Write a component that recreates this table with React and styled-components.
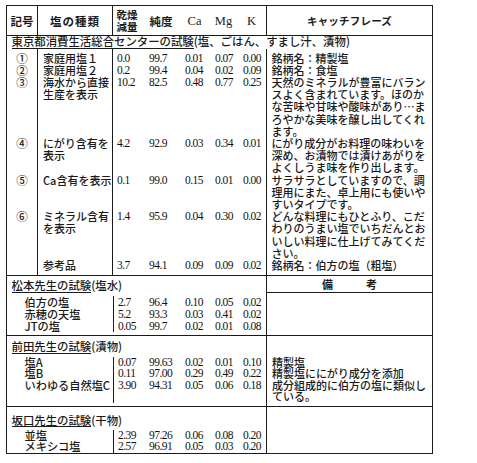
import React from 'react';
import styled, { createGlobalStyle } from 'styled-components';

const INK = '#1a1a1a';
const JP = `"Noto Sans CJK JP", "Noto Sans", sans-serif`;
const NUM = `"Liberation Serif", "Times New Roman", serif`;
const COLS = '31px 75px 154px 1fr';
const NUMCOLS = '32px 36px 30px 28px 28px';
const LH1 = 12.2;

const Global = createGlobalStyle`
  html, body { margin: 0; padding: 0; background: #fff; }
  body { font-family: ${JP}; color: ${INK}; font-weight: 500; }
`;

const Page = styled.div`
  width: 477px;
  height: 463px;
  box-sizing: border-box;
  padding: 5px 0 0 6px;
  background: #fff;
`;

const Table = styled.div`
  width: 427px;
  box-sizing: border-box;
  border: 1.5px solid ${INK};
  display: flex;
  flex-direction: column;
`;

/* ---------- header ---------- */
const HeadRow = styled.div`
  display: grid;
  grid-template-columns: ${COLS};
  height: 29px;
  border-bottom: 1px solid ${INK};
`;

const HeadCell = styled.div`
  display: flex;
  align-items: center;
  justify-content: center;
  border-right: ${(p) => (p.$last ? 'none' : `1px solid ${INK}`)};
  font-weight: 700;
  font-size: ${(p) => p.$size || 11.5}px;
  letter-spacing: ${(p) => p.$ls || 0}px;
  white-space: nowrap;
`;

const HeadNums = styled.div`
  display: grid;
  grid-template-columns: ${NUMCOLS};
  align-items: center;
  border-right: 1px solid ${INK};
`;

const NumHead = styled.div`
  text-align: center;
  padding-right: ${(p) => p.$pr || 3}px;
  font-family: ${(p) => (p.$serif ? NUM : JP)};
  font-weight: ${(p) => (p.$serif ? 400 : 700)};
  font-size: ${(p) => p.$size || 11.5}px;
  line-height: ${(p) => p.$lh || 12}px;
`;

/* ---------- section titles ---------- */
const SectionTitle = styled.div`
  height: ${(p) => p.$h}px;
  box-sizing: border-box;
  padding-left: 4.5px;
  display: flex;
  align-items: flex-end;
  font-size: 11.4px;
  white-space: nowrap;
`;

const TitleMain = styled.span`
  display: inline-block;
  line-height: 11.5px;
  border-bottom: 1px solid ${INK};
`;

const TitleRest = styled.span`
  display: inline-block;
  line-height: 11.5px;
  border-bottom: 1px solid transparent;
`;

/* ---------- section 1 grid ---------- */
const DataGrid = styled.div`
  display: grid;
  grid-template-columns: ${COLS};
  border-bottom: 1px solid ${INK};
  line-height: ${LH1}px;
`;

const Cell = styled.div`
  padding-top: ${(p) => p.$pt || 0}px;
  padding-bottom: ${(p) => p.$pb || 0}px;
  border-right: ${(p) => (p.$line ? `1px solid ${INK}` : 'none')};
  white-space: nowrap;
`;

const MarkCell = styled(Cell)`
  text-align: center;
  font-size: 11.5px;
`;

const NameCell = styled(Cell)`
  padding-left: 5px;
  font-size: 11px;
`;

const NumsCell = styled(Cell)`
  display: grid;
  grid-template-columns: ${NUMCOLS};
  align-content: start;
`;

const CatchCell = styled(Cell)`
  padding-left: 4.5px;
  font-size: 11px;
`;

const Num = styled.span`
  padding-left: 4px;
  font-family: ${NUM};
  font-weight: 400;
  font-size: 11.5px;
  letter-spacing: -0.55px;
  color: #111;
`;

const Line = styled.div`
  white-space: nowrap;
`;

/* ---------- lower sections ---------- */
const Lower = styled.div`
  display: flex;
  border-bottom: ${(p) => (p.$last ? 'none' : `1px solid ${INK}`)};
`;

const LowerLeft = styled.div`
  width: 260px;
  box-sizing: border-box;
  border-right: 1px solid ${INK};
  display: flex;
  flex-direction: column;
`;

const LowerBody = styled.div`
  display: grid;
  grid-template-columns: 106px 154px;
  padding: ${(p) => p.$pt}px 0 ${(p) => p.$pb}px;
  line-height: ${(p) => p.$lh}px;
`;

const LowerName = styled.div`
  padding-left: 17.5px;
  font-size: 11.2px;
  height: ${(p) => p.$lh}px;
  white-space: nowrap;
`;

const LowerNums = styled.div`
  display: grid;
  grid-template-columns: 31px 36px 30px 28px 28px;
  border-left: 1px solid ${INK};
  height: ${(p) => p.$lh}px;
`;

const LowerRight = styled.div`
  flex: 1;
  display: flex;
  flex-direction: column;
  padding-top: ${(p) => p.$pt || 0}px;
  font-size: 11px;
  line-height: ${(p) => p.$lh || 12}px;
`;

const RightText = styled.div`
  padding-left: 5px;
`;

const RemarkHead = styled.div`
  height: ${(p) => p.$h}px;
  box-sizing: border-box;
  border-bottom: 1px solid ${INK};
  display: flex;
  align-items: center;
  justify-content: center;
  font-weight: 700;
  font-size: 11px;
  white-space: pre;
`;

/* ---------- data ---------- */
const sec1 = [
  { mark: '①', name: ['家庭用塩１'], nums: ['0.0', '99.7', '0.01', '0.07', '0.00'], text: ['銘柄名：精製塩'] },
  { mark: '②', name: ['家庭用塩２'], nums: ['0.2', '99.4', '0.04', '0.02', '0.09'], text: ['銘柄名：食塩'] },
  {
    mark: '③',
    name: ['海水から直接', '生産を表示'],
    nums: ['10.2', '82.5', '0.48', '0.77', '0.25'],
    text: [
      '天然のミネラルが豊富にバラン',
      'スよく含まれています。ほのか',
      'な苦味や甘味や酸味があり…ま',
      'ろやかな美味を醸し出してくれ',
      'ます。',
    ],
  },
  {
    mark: '④',
    name: ['にがり含有を', '表示'],
    nums: ['4.2', '92.9', '0.03', '0.34', '0.01'],
    text: ['にがり成分がお料理の味わいを', '深め、お漬物では漬けあがりを', 'よくしうま味を作り出します。'],
  },
  {
    mark: '⑤',
    name: ['Ca含有を表示'],
    nums: ['0.1', '99.0', '0.15', '0.01', '0.00'],
    text: ['サラサラとしていますので、調', '理用にまた、卓上用にも使いや', 'すいタイプです。'],
  },
  {
    mark: '⑥',
    name: ['ミネラル含有', 'を表示'],
    nums: ['1.4', '95.9', '0.04', '0.30', '0.02'],
    text: ['どんな料理にもひとふり、こだ', 'わりのうまい塩でいちだんとお', 'いしい料理に仕上げてみてくだ', 'さい。'],
  },
  { mark: '', name: ['参考品'], nums: ['3.7', '94.1', '0.09', '0.09', '0.02'], text: ['銘柄名：伯方の塩（粗塩）'] },
];

const lowers = [
  {
    title: '松本先生の試験',
    rest: '(塩水)',
    titleH: 16.5,
    pt: 3,
    pb: 3.5,
    lh: 12,
    remark: true,
    rows: [
      { name: '伯方の塩', nums: ['2.7', '96.4', '0.10', '0.05', '0.02'] },
      { name: '赤穂の天塩', nums: ['5.2', '93.3', '0.03', '0.41', '0.02'] },
      { name: 'JTの塩', nums: ['0.05', '99.7', '0.02', '0.01', '0.08'] },
    ],
  },
  {
    title: '前田先生の試験',
    rest: '(漬物)',
    titleH: 17.5,
    pt: 3,
    pb: 3.5,
    lh: 11.5,
    rows: [
      { name: '塩A', nums: ['0.07', '99.63', '0.02', '0.01', '0.10'] },
      { name: '塩B', nums: ['0.11', '97.00', '0.29', '0.49', '0.22'] },
      { name: 'いわゆる自然塩C', nums: ['3.90', '94.31', '0.05', '0.06', '0.18'] },
      { name: '', nums: null },
    ],
    text: ['精製塩', '精製塩ににがり成分を添加', '成分組成的に伯方の塩に類似し', 'ている。'],
  },
  {
    title: '坂口先生の試験',
    rest: '(干物)',
    titleH: 20,
    pt: 2.5,
    pb: 0.5,
    lh: 11.5,
    rows: [
      { name: '並塩', nums: ['2.39', '97.26', '0.06', '0.08', '0.20'] },
      { name: 'メキシコ塩', nums: ['2.57', '96.91', '0.05', '0.03', '0.20'] },
    ],
  },
];

function Nums({ values }) {
  return values.map((v, i) => <Num key={i}>{v}</Num>);
}

export default function App() {
  return (
    <>
      <Global />
      <Page>
        <Table>
          <HeadRow>
            <HeadCell>記号</HeadCell>
            <HeadCell $ls={1}>塩の種類</HeadCell>
            <HeadNums>
              <NumHead $size={10.5} $lh={11.5} $pr={4}>
                乾燥
                <br />
                減量
              </NumHead>
              <NumHead $pr={4}>純度</NumHead>
              <NumHead $serif $size={12.5}>Ca</NumHead>
              <NumHead $serif $size={12.5}>Mg</NumHead>
              <NumHead $serif $size={12.5}>K</NumHead>
            </HeadNums>
            <HeadCell $last $size={10.5} $ls={0.2}>キャッチフレーズ</HeadCell>
          </HeadRow>

          <SectionTitle $h={12.5}>
            <TitleMain>東京都消費生活総合センターの試験</TitleMain>
            <TitleRest>(塩、ごはん、すまし汁、漬物)</TitleRest>
          </SectionTitle>

          <DataGrid>
            {sec1.map((r, i) => {
              const pt = i === 0 ? 3 : 0;
              const pb = i === sec1.length - 1 ? 4 : 0;
              return (
                <React.Fragment key={i}>
                  <MarkCell $line $pt={pt} $pb={pb}>{r.mark}</MarkCell>
                  <NameCell $line $pt={pt} $pb={pb}>
                    {r.name.map((l, j) => (
                      <Line key={j}>{l}</Line>
                    ))}
                  </NameCell>
                  <NumsCell $line $pt={pt} $pb={pb}>
                    <Nums values={r.nums} />
                  </NumsCell>
                  <CatchCell $pt={pt} $pb={pb}>
                    {r.text.map((l, j) => (
                      <Line key={j}>{l}</Line>
                    ))}
                  </CatchCell>
                </React.Fragment>
              );
            })}
          </DataGrid>

          {lowers.map((s, si) => (
            <Lower key={si} $last={si === lowers.length - 1}>
              <LowerLeft>
                <SectionTitle $h={s.titleH}>
                  <TitleMain>{s.title}</TitleMain>
                  <TitleRest>{s.rest}</TitleRest>
                </SectionTitle>
                <LowerBody $pt={s.pt} $pb={s.pb} $lh={s.lh}>
                  {s.rows.map((r, ri) => (
                    <React.Fragment key={ri}>
                      <LowerName $lh={s.lh}>{r.name}</LowerName>
                      <LowerNums $lh={s.lh}>{r.nums && <Nums values={r.nums} />}</LowerNums>
                    </React.Fragment>
                  ))}
                </LowerBody>
              </LowerLeft>
              {s.remark ? (
                <LowerRight>
                  <RemarkHead $h={s.titleH}>{'備　　　考'}</RemarkHead>
                </LowerRight>
              ) : (
                <LowerRight $pt={s.titleH + s.pt} $lh={s.lh}>
                  {s.text && (
                    <RightText>
                      {s.text.map((l, j) => (
                        <Line key={j}>{l}</Line>
                      ))}
                    </RightText>
                  )}
                </LowerRight>
              )}
            </Lower>
          ))}
        </Table>
      </Page>
    </>
  );
}
